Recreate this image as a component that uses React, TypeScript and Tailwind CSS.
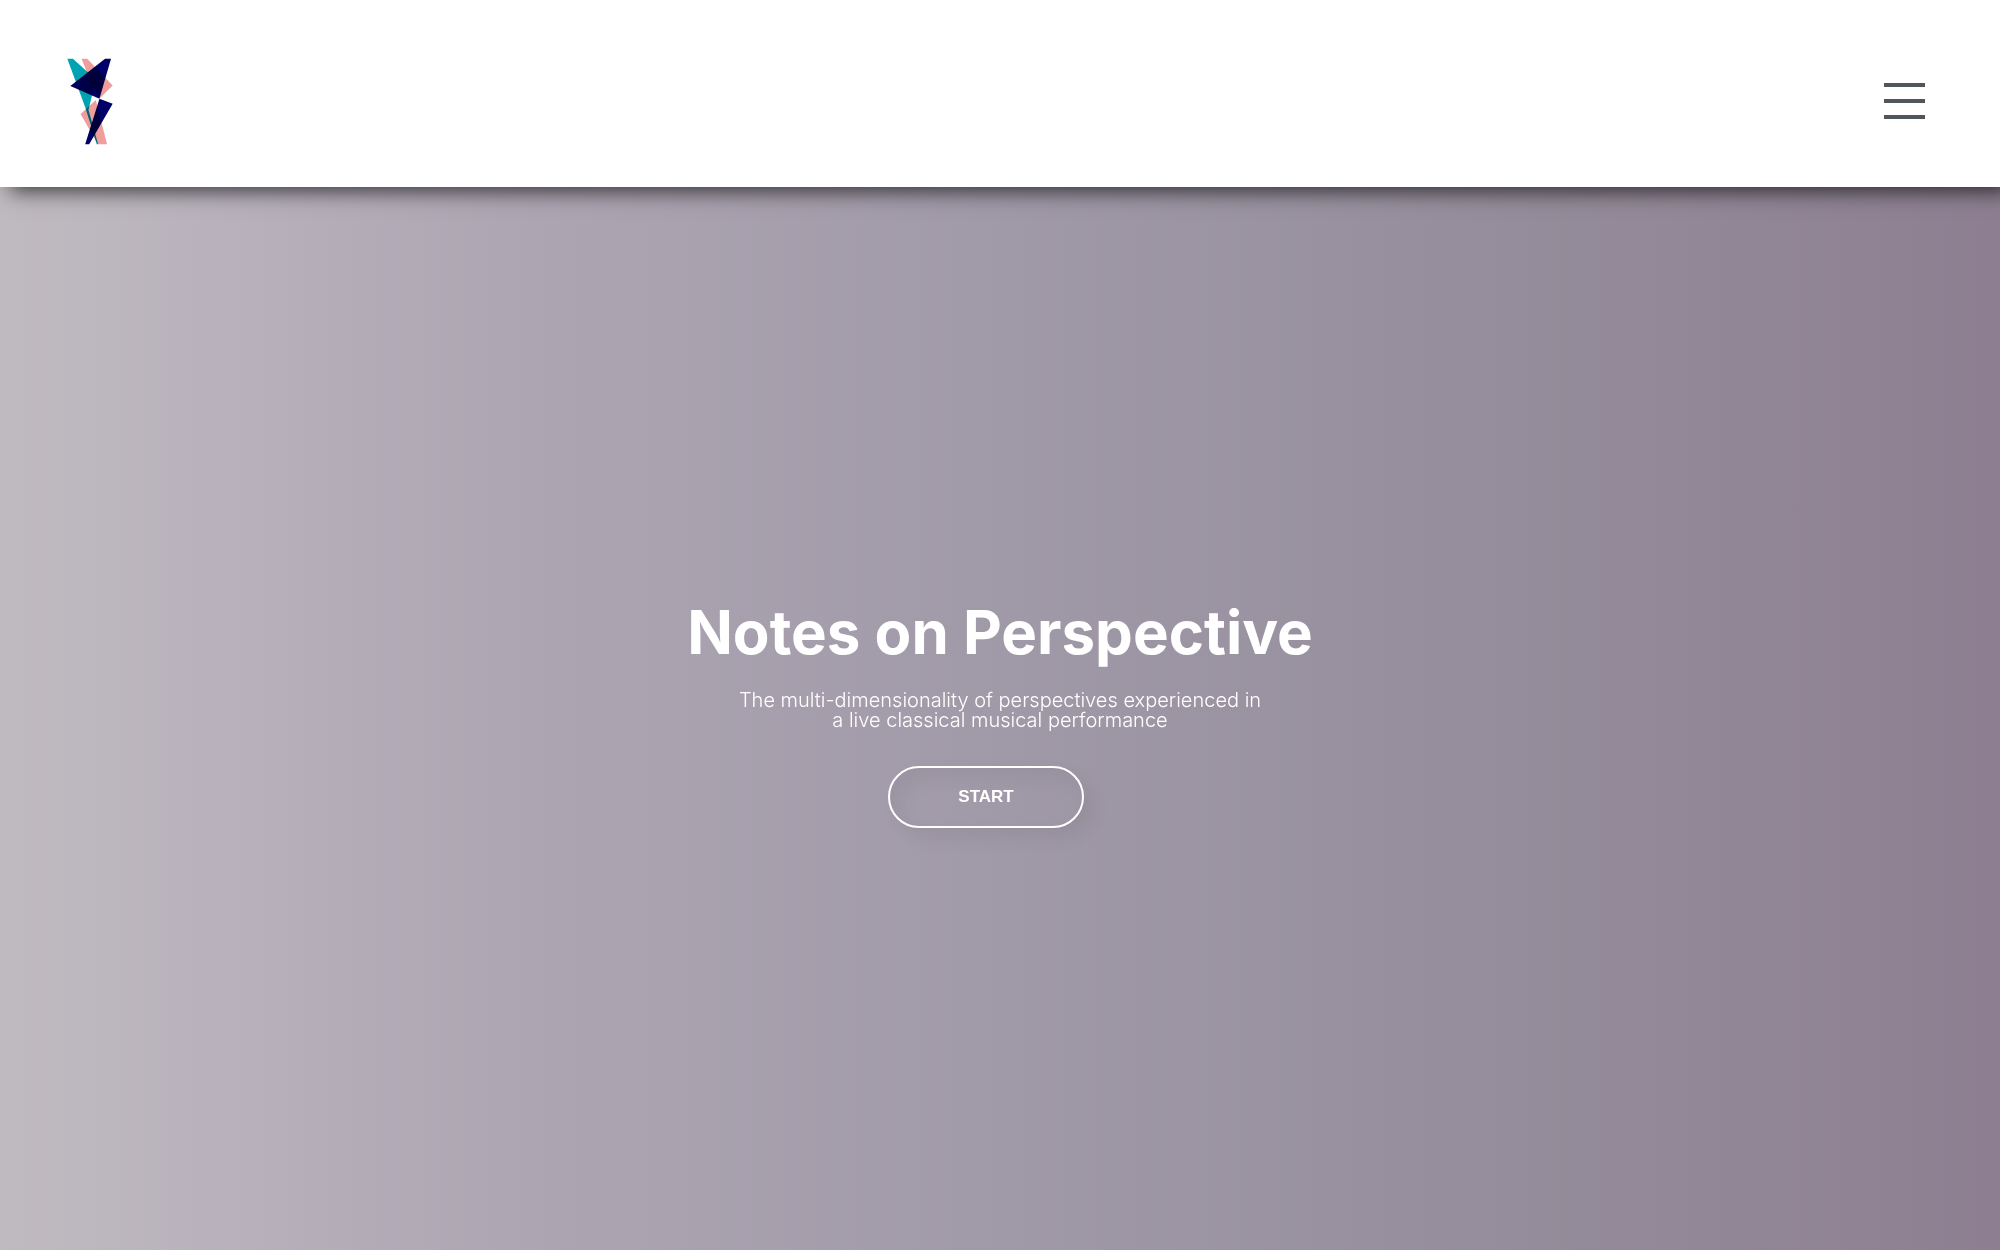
function Logo() {
  return (
    <svg viewBox="51 37 139 264" className="h-[88px] w-[46px]" aria-hidden="true">
      <g className="[&>*]:mix-blend-multiply">
        <path d="M52 41H69L138 104L116 196L145 300H141L106 188Z" fill="#00a3b1" />
        <path d="M95 41H112L189 122L151 160L128 124Z" fill="#f09d9d" />
        <path d="M138 166L172 300H144L92 208Z" fill="#f09d9d" />
        <path d="M166 41H184L149 162L61 124Z" fill="#000068" />
        <path d="M149 162L189 177L118 300H106Z" fill="#000068" />
      </g>
    </svg>
  );
}

function Header() {
  return (
    <header className="relative flex items-center justify-between bg-white pt-[57px] pr-[75px] pb-[42px] pl-[67px] shadow-[10px_4px_20px_#000000b3]">
      <a href="#home" aria-label="Home">
        <Logo />
      </a>
      <button type="button" aria-label="Open menu" className="flex w-[41px] flex-col gap-3">
        <span className="h-1 w-full bg-[#50565b]" />
        <span className="h-1 w-full bg-[#50565b]" />
        <span className="h-1 w-full bg-[#50565b]" />
      </button>
    </header>
  );
}

export default function App() {
  return (
    <div className="flex min-h-screen flex-col overflow-hidden bg-[linear-gradient(to_right,#bfbabf_0%,#b8b1bc_12%,#aea6b2_25%,#a099a8_50%,#958d9b_75%,#8d7f91_100%)] font-['Inter',sans-serif] text-white">
      <Header />
      <main className="flex grow flex-col items-center justify-center text-center">
        <h1 className="text-6xl leading-[60px] font-bold">Notes on Perspective</h1>
        <p className="mt-7 text-xl leading-5 font-light">
          The multi-dimensionality of perspectives experienced in
          <br />a live classical musical performance
        </p>
        <button
          type="button"
          className="mt-9 mr-7 mb-2 h-[62px] w-[196px] rounded-full border-2 border-white font-['Liberation_Sans',sans-serif] text-[17px] font-bold shadow-[10px_10px_20px_rgba(0,0,0,0.06),inset_10px_10px_20px_rgba(0,0,0,0.05)]"
        >
          START
        </button>
      </main>
    </div>
  );
}
